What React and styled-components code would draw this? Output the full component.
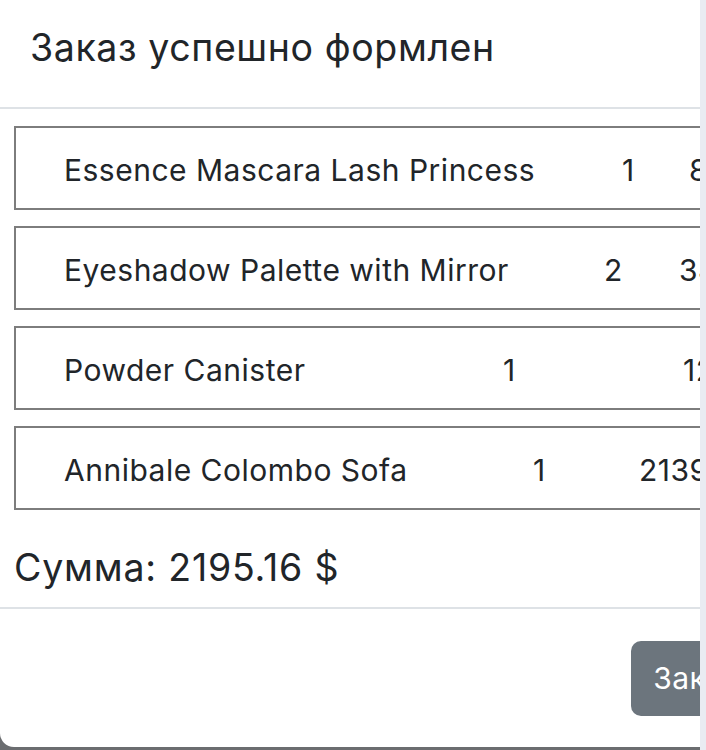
import React from "react";
import styled, { createGlobalStyle } from "styled-components";

const GlobalStyle = createGlobalStyle`
  html, body {
    margin: 0;
    padding: 0;
    background: #ffffff;
  }
  body {
    font-family: Inter, "Liberation Sans", Arial, sans-serif;
    color: #212529;
    overflow: hidden;
  }
`;

const Screen = styled.div`
  display: flex;
  width: 706px;
  height: 750px;
`;

const Viewport = styled.div`
  width: 700px;
  height: 750px;
  overflow: hidden;
  background: #6b6d70;
`;

const ScrollTrack = styled.div`
  width: 6px;
  height: 750px;
  background: #e9ecf2;
`;

const Modal = styled.div`
  width: 810px;
  height: 747px;
  background: #ffffff;
  border-bottom-left-radius: 14px;
  display: flex;
  flex-direction: column;
`;

const Header = styled.div`
  padding: 25px 30px 37px;
  border-bottom: 2px solid #dee2e6;
`;

const Title = styled.h5`
  margin: 0;
  font-size: 37.5px;
  line-height: 45px;
  font-weight: 400;
  letter-spacing: 0.6px;
`;

const Body = styled.div`
  padding: 17px 14px 0;
  display: flex;
  flex-direction: column;
  gap: 16px;
`;

const Item = styled.div`
  display: grid;
  grid-template-columns: ${(p) => p.$cols};
  align-items: center;
  height: 84px;
  box-sizing: border-box;
  padding: 3px 0 0 48px;
  border: 2px solid #7d7d7d;
  font-size: 30px;
  line-height: 36px;
  letter-spacing: 0.5px;
  white-space: nowrap;
`;

const Cell = styled.span``;

const Total = styled.h4`
  margin: 0;
  padding: 35px 14px 0;
  height: 62px;
  font-size: 37.5px;
  line-height: 45px;
  font-weight: 400;
  letter-spacing: 0.8px;
  border-bottom: 2px solid #dee2e6;
`;

const Footer = styled.div`
  flex: 1;
  display: flex;
  justify-content: flex-end;
  align-items: flex-start;
  padding: 32px 8px 0;
`;

const Button = styled.button`
  height: 75px;
  padding: 0 22px;
  border: none;
  border-radius: 10px;
  background: #6c757d;
  color: #ffffff;
  font-family: inherit;
  font-size: 30px;
  line-height: 45px;
  letter-spacing: 0.5px;
`;

const items = [
  { name: "Essence Mascara Lash Princess", qty: 1, price: "8.94", cols: "558px 67px auto" },
  { name: "Eyeshadow Palette with Mirror", qty: 2, price: "34.38", cols: "540px 75px auto" },
  { name: "Powder Canister", qty: 1, price: "12.25", cols: "439px 180px auto" },
  { name: "Annibale Colombo Sofa", qty: 1, price: "2139.59", cols: "469px 106px auto" },
];

export default function App() {
  return (
    <>
      <GlobalStyle />
      <Screen>
        <Viewport>
          <Modal>
            <Header>
              <Title>Заказ успешно формлен</Title>
            </Header>
            <Body>
              {items.map((item) => (
                <Item key={item.name} $cols={item.cols}>
                  <Cell>{item.name}</Cell>
                  <Cell>{item.qty}</Cell>
                  <Cell>{item.price}</Cell>
                </Item>
              ))}
            </Body>
            <Total>Сумма: 2195.16 $</Total>
            <Footer>
              <Button>Закрыть</Button>
            </Footer>
          </Modal>
        </Viewport>
        <ScrollTrack />
      </Screen>
    </>
  );
}
